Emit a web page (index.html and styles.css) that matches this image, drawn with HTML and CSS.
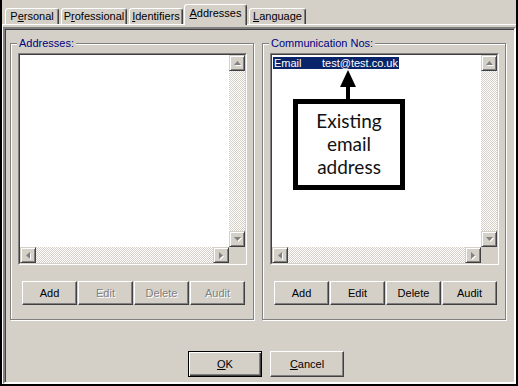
FILE: index.html
```html
<!DOCTYPE html>
<html>
<head>
<meta charset="utf-8">
<link rel="stylesheet" href="styles.css">
</head>
<body>
<div class="frame">
  <div class="tabs">
    <div class="tab t1">P<u>e</u>rsonal</div>
    <div class="tab t2">P<u>r</u>ofessional</div>
    <div class="tab t3"><u>I</u>dentifiers</div>
    <div class="tab t4 sel"><u>A</u>ddresses</div>
    <div class="tab t5"><u>L</u>anguage</div>
  </div>
  <div class="page">
    <div class="dialog">
      <div class="groups">
        <div class="group">
          <span class="legend">Addresses:</span>
          <div class="listbox">
            <div class="lb-inner">
              <div class="lb-content"></div>
              <div class="vscroll">
                <div class="sb-btn"><svg width="7" height="4" viewBox="0 0 7 4"><polygon points="3.5,0 7,4 0,4" fill="#808080"/></svg></div>
                <div class="track"></div>
                <div class="sb-btn"><svg width="7" height="4" viewBox="0 0 7 4"><polygon points="0,0 7,0 3.5,4" fill="#808080"/></svg></div>
              </div>
              <div class="hscroll">
                <div class="sb-btn"><svg width="4" height="7" viewBox="0 0 4 7"><polygon points="4,0 4,7 0,3.5" fill="#808080"/></svg></div>
                <div class="track"></div>
                <div class="sb-btn"><svg width="4" height="7" viewBox="0 0 4 7"><polygon points="0,0 4,3.5 0,7" fill="#808080"/></svg></div>
              </div>
              <div class="corner"></div>
            </div>
          </div>
          <div class="btnrow">
            <div class="btn">Add</div>
            <div class="btn dis">Edit</div>
            <div class="btn dis">Delete</div>
            <div class="btn dis">Audit</div>
          </div>
        </div>
        <div class="group">
          <span class="legend">Communication Nos:</span>
          <div class="listbox">
            <div class="lb-inner">
              <div class="lb-content">
                <div class="row"><span class="c1">Email</span><span class="c2">test@test.co.uk</span></div>
              </div>
              <div class="vscroll">
                <div class="sb-btn"><svg width="7" height="4" viewBox="0 0 7 4"><polygon points="3.5,0 7,4 0,4" fill="#808080"/></svg></div>
                <div class="track"></div>
                <div class="sb-btn"><svg width="7" height="4" viewBox="0 0 7 4"><polygon points="0,0 7,0 3.5,4" fill="#808080"/></svg></div>
              </div>
              <div class="hscroll">
                <div class="sb-btn"><svg width="4" height="7" viewBox="0 0 4 7"><polygon points="4,0 4,7 0,3.5" fill="#808080"/></svg></div>
                <div class="track"></div>
                <div class="sb-btn"><svg width="4" height="7" viewBox="0 0 4 7"><polygon points="0,0 4,3.5 0,7" fill="#808080"/></svg></div>
              </div>
              <div class="corner"></div>
            </div>
          </div>
          <div class="btnrow">
            <div class="btn">Add</div>
            <div class="btn">Edit</div>
            <div class="btn">Delete</div>
            <div class="btn">Audit</div>
          </div>
          <div class="callout">
            <svg class="arrow" width="16" height="29" viewBox="0 0 16 29"><polygon points="8,0 16,17 0,17" fill="#000"/><rect x="6" y="16" width="4" height="13" fill="#000"/></svg>
            <div class="note">Existing<br>email<br>address</div>
          </div>
        </div>
      </div>
      <div class="footer">
        <div class="btn big def"><span><u>O</u>K</span></div>
        <div class="btn big"><span><u>C</u>ancel</span></div>
      </div>
    </div>
  </div>
</div>
</body>
</html>
```

FILE: styles.css
```css
html, body {
  margin: 0;
  padding: 0;
}
body {
  background: #d4d0c8;
  font-family: "Liberation Sans", Arial, sans-serif;
  font-size: 11px;
  line-height: 13px;
  color: #000;
}
.frame {
  width: 518px;
  height: 386px;
  box-sizing: border-box;
  border: 2px solid #000;
  border-top: 0;
  display: flex;
  flex-direction: column;
}
.tabs {
  height: 24px;
  flex: none;
  display: flex;
  align-items: flex-end;
  padding-left: 3px;
  position: relative;
  z-index: 1;
}
.tab {
  box-sizing: border-box;
  height: 16px;
  border: 1px solid;
  border-bottom: 0;
  border-color: #fff #404040 transparent #fff;
  border-radius: 3px 3px 0 0;
  box-shadow: inset -1px 0 #808080;
  text-align: center;
  padding-top: 1px;
  margin-right: 2px;
  background: #d4d0c8;
  white-space: nowrap;
}
.tab u, .btn u { text-underline-offset: 1px; }
.t1 { width: 54px; }
.t2 { width: 66px; }
.t3 { width: 54px; margin-right: 1px; }
.t4 { width: 63px; }
.t5 { width: 57px; }
.tab.sel {
  height: 21px;
  margin-bottom: -1px;
  padding-top: 2px;
}
.page {
  flex: 1;
  display: flex;
  flex-direction: column;
  border-top: 1px solid #fff;
  border-left: 1px solid #fff;
  padding-top: 2px;
}
.dialog {
  flex: 1;
  border: 2px solid;
  border-color: #808080 #fff #fff #808080;
  box-shadow: inset 1px 1px #404040, inset -1px -1px #d4d0c8;
  padding: 14px 0 0 5px;
}
.groups {
  display: grid;
  grid-template-columns: 244px 244px;
  column-gap: 8px;
}
.group {
  position: relative;
  box-sizing: border-box;
  height: 277px;
  border: 1px solid #808080;
  box-shadow: inset 1px 1px #fff, 1px 1px #fff;
  padding: 9px 0 0 7px;
}
.legend {
  position: absolute;
  left: 6px;
  top: -7px;
  padding: 0 2px;
  background: #d4d0c8;
  color: #000080;
  white-space: nowrap;
}
.listbox {
  box-sizing: border-box;
  width: 229px;
  height: 212px;
  border: 1px solid;
  border-color: #808080 #fff #fff #808080;
}
.lb-inner {
  box-sizing: border-box;
  height: 100%;
  border: 1px solid;
  border-color: #404040 #d4d0c8 #d4d0c8 #404040;
  display: grid;
  grid-template-columns: 1fr 16px;
  grid-template-rows: 1fr 16px;
}
.lb-content {
  background: #fff;
  padding: 2px 0 0 1px;
}
.row {
  display: inline-flex;
  height: 12px;
  line-height: 12px;
  background: #0a246a;
  color: #fff;
}
.c1 {
  width: 48px;
  padding-left: 1px;
}
.c2 {
  padding-right: 1px;
}
.vscroll {
  display: flex;
  flex-direction: column;
}
.hscroll {
  display: flex;
}
.track {
  flex: 1;
  background-color: #d4d0c8;
  background-image: conic-gradient(#fff 25%, #d4d0c8 0 50%, #fff 0 75%, #d4d0c8 0);
  background-size: 2px 2px;
}
.sb-btn {
  box-sizing: border-box;
  width: 16px;
  height: 16px;
  flex: none;
  border: 1px solid;
  border-color: #d4d0c8 #404040 #404040 #d4d0c8;
  box-shadow: inset 1px 1px #fff, inset -1px -1px #808080;
  background: #d4d0c8;
  display: flex;
  align-items: center;
  justify-content: center;
}
.sb-btn svg {
  display: block;
  filter: drop-shadow(1px 1px 0 #fff);
}
.corner {
  background: #d4d0c8;
}
.btnrow {
  display: flex;
  gap: 1px;
  margin: 16px 0 0 4px;
}
.btn {
  box-sizing: border-box;
  width: 55px;
  height: 24px;
  border: 1px solid;
  border-color: #fff #404040 #404040 #fff;
  box-shadow: inset -1px -1px #808080;
  display: flex;
  align-items: center;
  justify-content: center;
  background: #d4d0c8;
}
.btn.dis {
  color: #808080;
  text-shadow: 1px 1px 0 #fff;
}
.footer {
  display: flex;
  gap: 8px;
  margin-top: 31px;
  padding-left: 178px;
}
.btn.big {
  width: 74px;
  height: 26px;
}
.btn.def {
  border: 1px solid #000;
  box-shadow: inset 1px 1px #fff, inset -1px -1px #404040, inset -2px -2px #808080;
}
.callout {
  position: absolute;
  left: 30px;
  top: 26px;
  width: 112px;
}
.arrow {
  display: block;
  margin-left: 47px;
}
.note {
  box-sizing: border-box;
  width: 112px;
  height: 91px;
  border: 5px solid #000;
  background: #fff;
  font-family: Lato, "Open Sans", sans-serif;
  font-size: 19px;
  line-height: 23px;
  text-align: center;
  padding-top: 5px;
  color: #111;
}
```
